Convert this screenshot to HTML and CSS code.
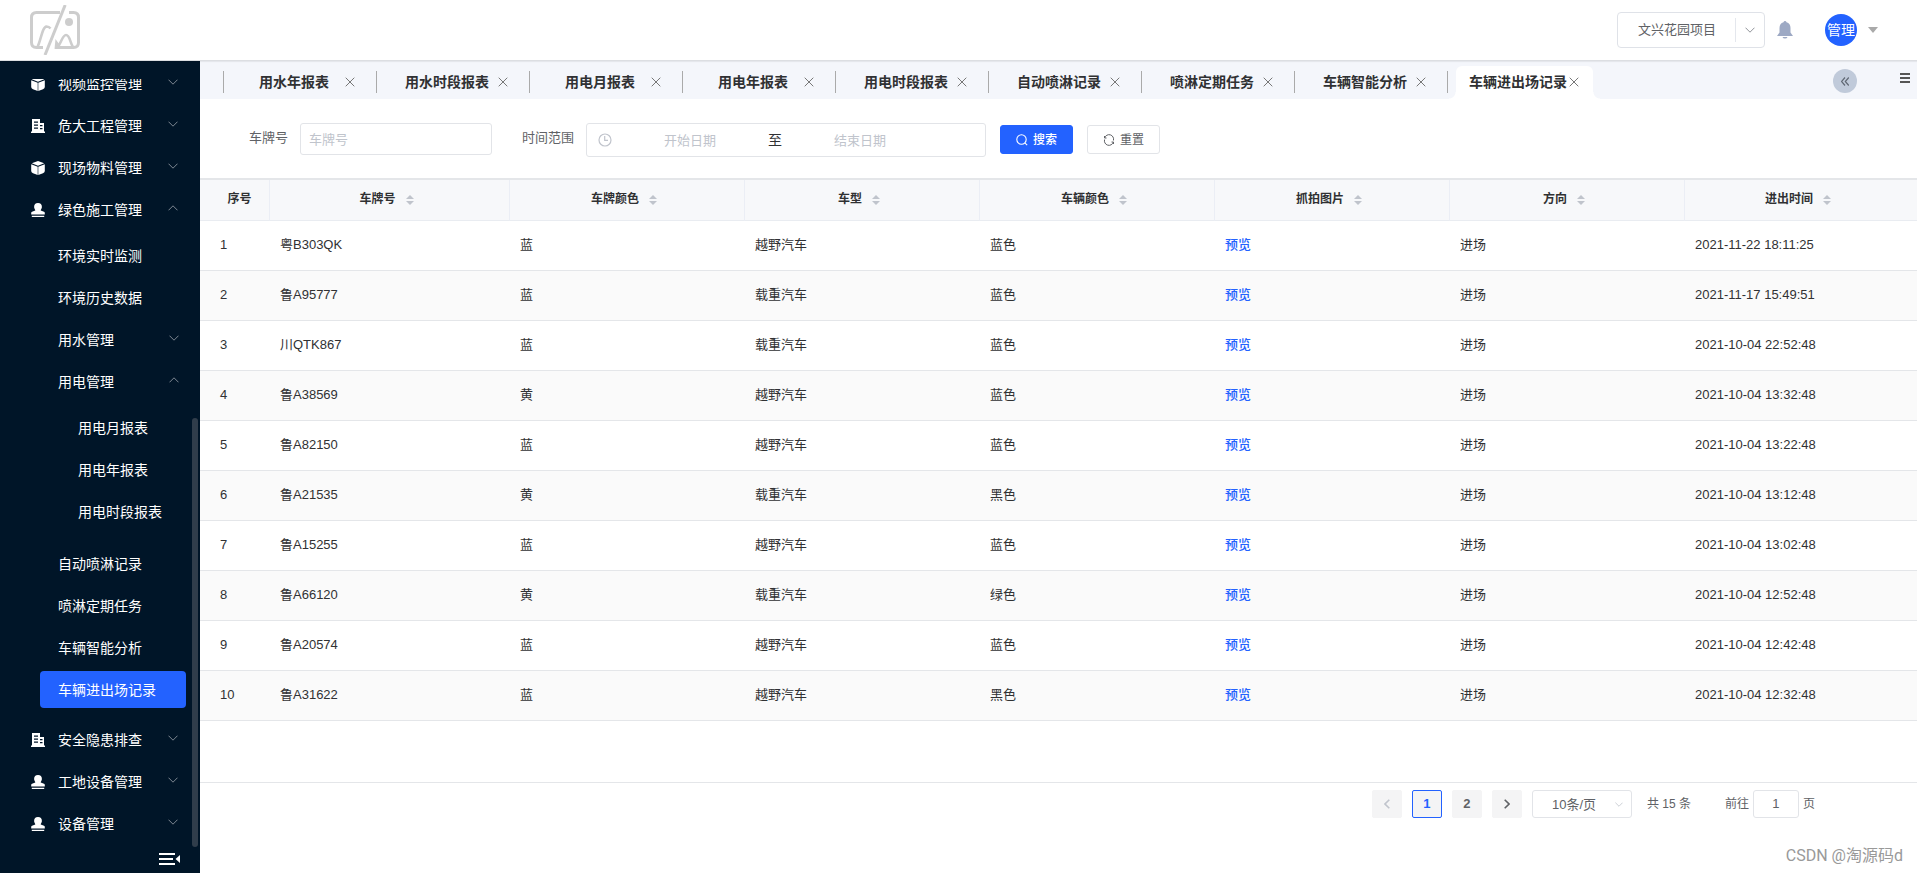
FILE: index.html
```html
<!DOCTYPE html>
<html lang="zh-CN">
<head>
<meta charset="utf-8">
<title>车辆进出场记录</title>
<link rel="stylesheet" href="styles.css">
</head>
<body>
<svg class="defs" aria-hidden="true">
  <symbol id="i-box" viewBox="0 0 14 14"><path fill="currentColor" d="M7 0l6.200 2.200L7 4.700.8 2.200zM.2 3.200l6.500 2.600V14L2 12.300Q.2 11.600.2 10zM13.800 3.200L7.300 5.800V14l4.700-1.700q1.800-.7 1.800-2.300z"/></symbol>
  <symbol id="i-building" viewBox="0 0 14 14"><path fill="currentColor" fill-rule="evenodd" d="M1 0h8v4h4v8.500h1V14H0v-1.500h1zM3 2.500v1.300h4V2.500zM3 5.500v1.300h4V5.500zM3 8.500v1.300h4V8.500zM9 6v1.200h2.500V6zM9 9v1.200h2.500V9z"/></symbol>
  <symbol id="i-user" viewBox="0 0 14 14"><path fill="currentColor" d="M7 0a3.900 3.900 0 0 1 3.900 3.900c0 1.500-1.200 2.400-1.200 3.600L13 8.700q.8.300.8 1.100v1.800H.2V9.800q0-.8.8-1.100l3.300-1.200c0-1.200-1.200-2.100-1.200-3.600A3.900 3.900 0 0 1 7 0zM.8 12.800h12.400V14H.8z"/></symbol>
  <symbol id="i-down" viewBox="0 0 10 6"><path fill="none" stroke="currentColor" d="M.5.7L5 5.200 9.500.7"/></symbol>
  <symbol id="i-close" viewBox="0 0 10 10"><path fill="none" stroke="currentColor" d="M.7.7l8.600 8.600M9.300.7L.7 9.300"/></symbol>
  <symbol id="i-sort" viewBox="0 0 8 10"><path fill="currentColor" d="M4 0l4 4H0zM0 6h8l-4 4z"/></symbol>
</svg>

<header class="header">
  <svg class="logo" viewBox="0 0 50 50" role="img" aria-label="logo">
    <g fill="none" stroke="#cdcdcd" stroke-width="3">
      <path d="M30 7.500H6.500q-5 0-5 5v25q0 5 5 5H13M39 7.500h4.500q5 0 5 5v25q0 5-5 5H25"/>
      <path d="M35.200 0L15 50"/>
      <path stroke-width="2.600" d="M7 43c4-7 5-21 9.500-21.500q2.500 0 4 2M27 42c4-2 5-12 9-12s4 8 7 12"/>
    </g>
    <circle cx="39" cy="17" r="4" fill="#cdcdcd"/>
    <path fill="#cdcdcd" d="M25.500 34l5 7-6 3z"/>
  </svg>
  <div class="header-tools">
    <div class="project">
      <select class="project-select" aria-label="项目"><option>文兴花园项目</option></select>
      <span class="project-arrow"><svg width="10" height="6"><use href="#i-down"/></svg></span>
    </div>
    <button class="plain bell" aria-label="通知"><svg width="16" height="18" viewBox="0 0 16 18"><path fill="#9da9c4" d="M8 0q1.200 0 1.500 1.300Q13.500 2.500 13.500 7v4.500L16 15H0l2.500-3.500V7q0-4.500 4-5.700Q6.800 0 8 0zM5.500 16h5Q10 17.500 8 17.500T5.500 16z"/></svg></button>
    <button class="plain account"><span class="avatar">管理</span><svg width="10" height="6" viewBox="0 0 10 6"><path fill="#a9a9a9" d="M0 0h10L5 6z"/></svg></button>
  </div>
</header>

<div class="body">
  <nav class="sidebar" aria-label="菜单">
    <div class="menu-view">
      <ul class="menu">
        <li><a class="item" href="#"><svg class="icon"><use href="#i-box"/></svg>视频监控管理<svg class="arrow"><use href="#i-down"/></svg></a></li>
        <li><a class="item" href="#"><svg class="icon"><use href="#i-building"/></svg>危大工程管理<svg class="arrow"><use href="#i-down"/></svg></a></li>
        <li><a class="item" href="#"><svg class="icon"><use href="#i-box"/></svg>现场物料管理<svg class="arrow"><use href="#i-down"/></svg></a></li>
        <li><a class="item" href="#"><svg class="icon"><use href="#i-user"/></svg>绿色施工管理<svg class="arrow up"><use href="#i-down"/></svg></a>
          <ul class="sub">
            <li><a class="item" href="#">环境实时监测</a></li>
            <li><a class="item" href="#">环境历史数据</a></li>
            <li><a class="item" href="#">用水管理<svg class="arrow"><use href="#i-down"/></svg></a></li>
            <li><a class="item" href="#">用电管理<svg class="arrow up"><use href="#i-down"/></svg></a>
              <ul class="sub deep">
                <li><a class="item" href="#">用电月报表</a></li>
                <li><a class="item" href="#">用电年报表</a></li>
                <li><a class="item" href="#">用电时段报表</a></li>
              </ul>
            </li>
            <li><a class="item" href="#">自动喷淋记录</a></li>
            <li><a class="item" href="#">喷淋定期任务</a></li>
            <li><a class="item" href="#">车辆智能分析</a></li>
            <li><a class="item active" href="#" aria-current="page">车辆进出场记录</a></li>
          </ul>
        </li>
        <li><a class="item" href="#"><svg class="icon"><use href="#i-building"/></svg>安全隐患排查<svg class="arrow"><use href="#i-down"/></svg></a></li>
        <li><a class="item" href="#"><svg class="icon"><use href="#i-user"/></svg>工地设备管理<svg class="arrow"><use href="#i-down"/></svg></a></li>
        <li><a class="item" href="#"><svg class="icon"><use href="#i-user"/></svg>设备管理<svg class="arrow"><use href="#i-down"/></svg></a></li>
      </ul>
    </div>
    <div class="sidebar-foot">
      <button class="plain" aria-label="收起菜单"><svg width="22" height="12" viewBox="0 0 22 12"><path fill="#fff" d="M0 0h16v2H0zM0 5h14v2H0zM0 10h16v2H0zM21 2v8l-4.500-4z"/></svg></button>
    </div>
    <span class="thumb"></span>
  </nav>

  <main class="main">
    <div class="tabs">
      <div class="tab"><div class="pill"><a href="#">用水年报表</a><button class="plain close" aria-label="关闭"><svg width="10" height="10"><use href="#i-close"/></svg></button></div></div>
      <div class="tab"><div class="pill"><a href="#">用水时段报表</a><button class="plain close" aria-label="关闭"><svg width="10" height="10"><use href="#i-close"/></svg></button></div></div>
      <div class="tab"><div class="pill"><a href="#">用电月报表</a><button class="plain close" aria-label="关闭"><svg width="10" height="10"><use href="#i-close"/></svg></button></div></div>
      <div class="tab"><div class="pill"><a href="#">用电年报表</a><button class="plain close" aria-label="关闭"><svg width="10" height="10"><use href="#i-close"/></svg></button></div></div>
      <div class="tab"><div class="pill"><a href="#">用电时段报表</a><button class="plain close" aria-label="关闭"><svg width="10" height="10"><use href="#i-close"/></svg></button></div></div>
      <div class="tab"><div class="pill"><a href="#">自动喷淋记录</a><button class="plain close" aria-label="关闭"><svg width="10" height="10"><use href="#i-close"/></svg></button></div></div>
      <div class="tab"><div class="pill"><a href="#">喷淋定期任务</a><button class="plain close" aria-label="关闭"><svg width="10" height="10"><use href="#i-close"/></svg></button></div></div>
      <div class="tab"><div class="pill"><a href="#">车辆智能分析</a><button class="plain close" aria-label="关闭"><svg width="10" height="10"><use href="#i-close"/></svg></button></div></div>
      <div class="tab current"><div class="pill"><a href="#">车辆进出场记录</a><button class="plain close" aria-label="关闭"><svg width="10" height="10"><use href="#i-close"/></svg></button></div></div>
      <div class="tab-tools">
        <button class="plain back" aria-label="向左"><svg width="8" height="9" viewBox="0 0 8 9"><path fill="none" stroke="#606874" stroke-width="1.200" d="M4 .5l-3.500 4 3.500 4M7.800.5l-3.500 4 3.500 4"/></svg></button>
        <button class="plain list" aria-label="标签列表"><svg width="10" height="10" viewBox="0 0 10 10"><path fill="#555" d="M0 0h10v2H0zM0 4h10v2H0zM0 8h10v2H0z"/></svg></button>
      </div>
    </div>

    <form class="filters" onsubmit="return false">
      <label for="plate">车牌号</label>
      <input id="plate" class="field plate" type="text" placeholder="车牌号">
      <label for="start">时间范围</label>
      <div class="field range">
        <svg width="14" height="14" viewBox="0 0 14 14"><g fill="none" stroke="#c0c4cc" stroke-width="1.200"><circle cx="7" cy="7" r="6"/><path d="M6.700 3v4.300H10"/></g></svg>
        <input id="start" type="text" placeholder="开始日期">
        <span>至</span>
        <input id="end" type="text" placeholder="结束日期" aria-label="结束日期">
      </div>
      <button class="btn primary"><svg width="12" height="12" viewBox="0 0 12 12"><path fill="none" stroke="#fff" stroke-width="1.100" d="M5.500.8a4.700 4.700 0 1 0 0 9.400 4.700 4.700 0 1 0 0-9.400M8.800 8.800l2.400 2.400"/></svg>搜索</button>
      <button class="btn"><svg width="12" height="12" viewBox="0 0 12 12"><path fill="none" stroke="#606266" d="M1.500 4v-2M1.500 4h2M1.700 3.900A4.400 4.400 0 0 1 10.400 6.500M10.500 8v2M10.500 8h-2M10.300 8.100A4.400 4.400 0 0 1 1.600 5.500"/></svg>重置</button>
    </form>

    <div class="table-wrap">
      <table class="grid">
        <colgroup><col class="c-index"><col class="c-plate"><col class="c-data"><col class="c-data"><col class="c-data"><col class="c-data"><col class="c-data"><col></colgroup>
        <thead><tr>
          <th>序号</th>
          <th>车牌号<svg class="sort"><use href="#i-sort"/></svg></th>
          <th>车牌颜色<svg class="sort"><use href="#i-sort"/></svg></th>
          <th>车型<svg class="sort"><use href="#i-sort"/></svg></th>
          <th>车辆颜色<svg class="sort"><use href="#i-sort"/></svg></th>
          <th>抓拍图片<svg class="sort"><use href="#i-sort"/></svg></th>
          <th>方向<svg class="sort"><use href="#i-sort"/></svg></th>
          <th>进出时间<svg class="sort"><use href="#i-sort"/></svg></th>
        </tr></thead>
        <tbody>
          <tr><td>1</td><td>粤B303QK</td><td>蓝</td><td>越野汽车</td><td>蓝色</td><td><a href="#">预览</a></td><td>进场</td><td>2021-11-22 18:11:25</td></tr>
          <tr><td>2</td><td>鲁A95777</td><td>蓝</td><td>载重汽车</td><td>蓝色</td><td><a href="#">预览</a></td><td>进场</td><td>2021-11-17 15:49:51</td></tr>
          <tr><td>3</td><td>川QTK867</td><td>蓝</td><td>载重汽车</td><td>蓝色</td><td><a href="#">预览</a></td><td>进场</td><td>2021-10-04 22:52:48</td></tr>
          <tr><td>4</td><td>鲁A38569</td><td>黄</td><td>越野汽车</td><td>蓝色</td><td><a href="#">预览</a></td><td>进场</td><td>2021-10-04 13:32:48</td></tr>
          <tr><td>5</td><td>鲁A82150</td><td>蓝</td><td>越野汽车</td><td>蓝色</td><td><a href="#">预览</a></td><td>进场</td><td>2021-10-04 13:22:48</td></tr>
          <tr><td>6</td><td>鲁A21535</td><td>黄</td><td>载重汽车</td><td>黑色</td><td><a href="#">预览</a></td><td>进场</td><td>2021-10-04 13:12:48</td></tr>
          <tr><td>7</td><td>鲁A15255</td><td>蓝</td><td>越野汽车</td><td>蓝色</td><td><a href="#">预览</a></td><td>进场</td><td>2021-10-04 13:02:48</td></tr>
          <tr><td>8</td><td>鲁A66120</td><td>黄</td><td>载重汽车</td><td>绿色</td><td><a href="#">预览</a></td><td>进场</td><td>2021-10-04 12:52:48</td></tr>
          <tr><td>9</td><td>鲁A20574</td><td>蓝</td><td>越野汽车</td><td>蓝色</td><td><a href="#">预览</a></td><td>进场</td><td>2021-10-04 12:42:48</td></tr>
          <tr><td>10</td><td>鲁A31622</td><td>蓝</td><td>越野汽车</td><td>黑色</td><td><a href="#">预览</a></td><td>进场</td><td>2021-10-04 12:32:48</td></tr>
        </tbody>
      </table>
    </div>

    <div class="pager">
      <button class="page off" aria-label="上一页" disabled><svg width="6" height="10" viewBox="0 0 6 10"><path fill="none" stroke="currentColor" stroke-width="1.600" d="M5.300.7L1 5l4.300 4.300"/></svg></button>
      <button class="page on">1</button>
      <button class="page">2</button>
      <button class="page" aria-label="下一页"><svg width="6" height="10" viewBox="0 0 6 10"><path fill="none" stroke="currentColor" stroke-width="1.600" d="M.7.7L5 5 .7 9.300"/></svg></button>
      <div class="size">
        <select aria-label="每页条数"><option>10条/页</option></select>
        <svg width="8" height="5"><use href="#i-down"/></svg>
      </div>
      <span class="total">共 15 条</span>
      <label class="jump">前往<input type="text" value="1">页</label>
    </div>
  </main>
</div>
<div class="watermark">CSDN @淘源码d</div>
</body>
</html>
```

FILE: styles.css
```css
* { box-sizing: border-box; }
body {
  margin: 0;
  min-height: 100vh;
  display: flex;
  flex-direction: column;
  position: relative;
  background: #fff;
  color: #303133;
  font: 13px/20px "Liberation Sans", "Noto Sans CJK SC", sans-serif;
}
a { color: inherit; text-decoration: none; }
ul { list-style: none; margin: 0; padding: 0; }
svg { display: block; flex: none; }
button, input, select { font: inherit; color: inherit; margin: 0; }
.plain { display: flex; align-items: center; justify-content: center; border: 0; padding: 0; background: none; cursor: pointer; }
.defs { position: absolute; width: 0; height: 0; }

/* Header */
.header {
  height: 61px;
  padding: 0 39px 0 30px;
  display: flex;
  align-items: center;
  justify-content: space-between;
  position: relative;
  z-index: 2;
  background: #fff;
  border-bottom: 1px solid #dcdee2;
  box-shadow: 0 1px 1px rgba(0, 0, 0, .06);
}
.logo { width: 50px; height: 50px; }
.header-tools { display: flex; align-items: center; }
.project {
  width: 148px;
  height: 36px;
  display: flex;
  align-items: center;
  border: 1px solid #dfe2e8;
  border-radius: 4px;
}
.project-select {
  flex: 1;
  min-width: 0;
  height: 34px;
  padding: 0 0 0 20px;
  border: 0;
  background: none;
  appearance: none;
  color: #606266;
}
.project-arrow {
  width: 29px;
  height: 24px;
  display: flex;
  align-items: center;
  justify-content: center;
  border-left: 1px solid #e4e7ed;
  color: #909399;
}
.bell { margin-left: 12px; }
.account { margin-left: 32px; gap: 11px; }
.avatar {
  width: 32px;
  height: 32px;
  border-radius: 50%;
  background: #2362ff;
  color: #fff;
  font-size: 14px;
  line-height: 32px;
}

.body { flex: 1; display: flex; }

/* Sidebar */
.sidebar {
  width: 200px;
  flex: none;
  padding-top: 18px;
  display: flex;
  flex-direction: column;
  position: relative;
  background: #001528;
  color: #fff;
  font-size: 14px;
}
.menu-view { flex: 1; overflow: hidden; }
.menu { margin-top: -16px; }
.item { display: flex; align-items: center; height: 42px; padding: 0 22px 0 31px; }
.icon { width: 14px; height: 14px; margin-right: 13px; }
.arrow { width: 10px; height: 6px; margin: 0 0 4px auto; color: #7d8792; }
.arrow.up { transform: rotate(180deg); }
.sub { padding: 4px 0 8px; }
.sub .item { padding: 0 21px 0 58px; }
.deep { padding-bottom: 10px; }
.deep .item { padding-left: 78px; }
.sub .active {
  height: 37px;
  margin: 2px 14px 3px 40px;
  padding: 0 0 0 18px;
  border-radius: 4px;
  background: #2362ff;
}
.sidebar-foot { display: flex; justify-content: flex-end; padding: 8px 19px; }
.thumb {
  position: absolute;
  top: 44%;
  right: 2px;
  bottom: 26px;
  width: 6px;
  border-radius: 3px;
  background: #303d4b;
}

/* Tabs */
.main { flex: 1; min-width: 0; display: flex; flex-direction: column; }
.tabs {
  height: 38px;
  padding: 5px 7px 0 23px;
  display: flex;
  background: #f4f6fb;
}
.tab { width: 153px; display: flex; padding-right: 7px; }
.tab::before { content: ""; width: 1px; height: 22px; margin: 5px 8px 0 0; background: #aaa; }
.pill { flex: 1; display: flex; align-items: center; padding: 0 12px 2px 13px; position: relative; font-weight: 700; font-size: 14px; }
.pill a { flex: 1; text-align: center; white-space: nowrap; }
.close { width: 14px; height: 14px; color: #777; }
.current .pill { background: #fff; border-radius: 6px 6px 0 0; }
.current .pill::before, .current .pill::after {
  content: "";
  position: absolute;
  bottom: 0;
  width: 7px;
  height: 7px;
}
.current .pill::before { right: 100%; background: radial-gradient(circle at 0 0, transparent 6px, #fff 7px); }
.current .pill::after { left: 100%; background: radial-gradient(circle at 100% 0, transparent 6px, #fff 7px); }
.tab-tools { margin-left: auto; display: flex; align-items: flex-start; gap: 43px; padding-top: 3px; }
.back { width: 24px; height: 24px; border-radius: 50%; background: #c0cada; }
.list { height: 18px; }

/* Filters */
.filters { height: 79px; display: flex; align-items: flex-start; padding: 24px 49px 0; }
.filters label { line-height: 30px; color: #606266; margin-right: 12px; }
.field { border: 1px solid #e2e4e8; border-radius: 3px; background: #fff; }
.plate { width: 192px; height: 32px; padding: 0 8px; margin-right: 30px; }
.range { width: 400px; height: 34px; margin-right: 14px; padding-left: 11px; display: flex; align-items: center; }
.range input { width: 156px; height: 30px; padding: 0; border: 0; background: none; text-align: center; }
.range span { width: 14px; font-size: 14px; }
::placeholder { color: #c0c4cc; opacity: 1; }
.btn {
  width: 73px;
  height: 29px;
  margin: 2px 14px 0 0;
  padding: 0;
  display: flex;
  align-items: center;
  justify-content: center;
  gap: 5px;
  border: 1px solid #e2e4e8;
  border-radius: 3px;
  background: #fff;
  color: #606266;
  font-size: 12px;
}
.primary { background: #2362ff; border-color: #2362ff; color: #fff; font-weight: 500; }

/* Table */
.table-wrap { flex: 1; border-top: 2px solid #e4e6e9; }
.grid { width: 100%; table-layout: fixed; border-collapse: separate; border-spacing: 0; }
.c-index { width: 70px; }
.c-plate { width: 240px; }
.c-data { width: 235px; }
.grid th {
  height: 41px;
  padding: 0 0 2px;
  border-right: 1px solid #ebeef5;
  border-bottom: 1px solid #e9ecf1;
  background: #f7f8fa;
  font-size: 12px;
}
.grid th:last-child { border-right: 0; }
.grid th:first-child { padding-left: 10px; }
.sort { display: inline-block; width: 8px; height: 10px; margin: 0 6px 0 10px; vertical-align: -2px; color: #c0c4cc; }
.grid td { height: 50px; padding: 0 10px 1px; border-bottom: 1px solid #e4e6e9; }
.grid td:first-child { padding-left: 20px; }
.grid tr:nth-child(even) td { background: #fafafa; }
.grid td a { color: #2362ff; font-weight: 500; }

/* Pagination */
.pager {
  height: 91px;
  padding: 7px 102px 0 0;
  display: flex;
  align-items: flex-start;
  justify-content: flex-end;
  gap: 10px;
  border-top: 1px solid #e4e6e9;
  color: #606266;
  line-height: 28px;
}
.page {
  width: 30px;
  height: 28px;
  padding: 0;
  display: flex;
  align-items: center;
  justify-content: center;
  border: 1px solid #f4f4f5;
  border-radius: 2px;
  background: #f4f4f5;
  font-weight: 700;
}
.off { color: #c0c4cc; }
.on { border-color: #2362ff; color: #2362ff; }
.size { width: 100px; height: 28px; display: flex; align-items: center; padding-right: 8px; border: 1px solid #e2e4e8; border-radius: 3px; color: #c0c4cc; }
.size select { flex: 1; height: 26px; padding: 0 0 0 19px; border: 0; background: none; appearance: none; color: #606266; }
.total { margin: 0 24px 0 5px; font-size: 12px; }
.jump { display: flex; gap: 4px; font-size: 12px; }
.jump input { width: 46px; height: 28px; padding: 0; border: 1px solid #e2e4e8; border-radius: 3px; text-align: center; font-size: 13px; }

.watermark { position: absolute; right: 14px; bottom: 4px; color: #999; font: 16px/26px Roboto, "Noto Sans CJK SC", sans-serif; }
```
